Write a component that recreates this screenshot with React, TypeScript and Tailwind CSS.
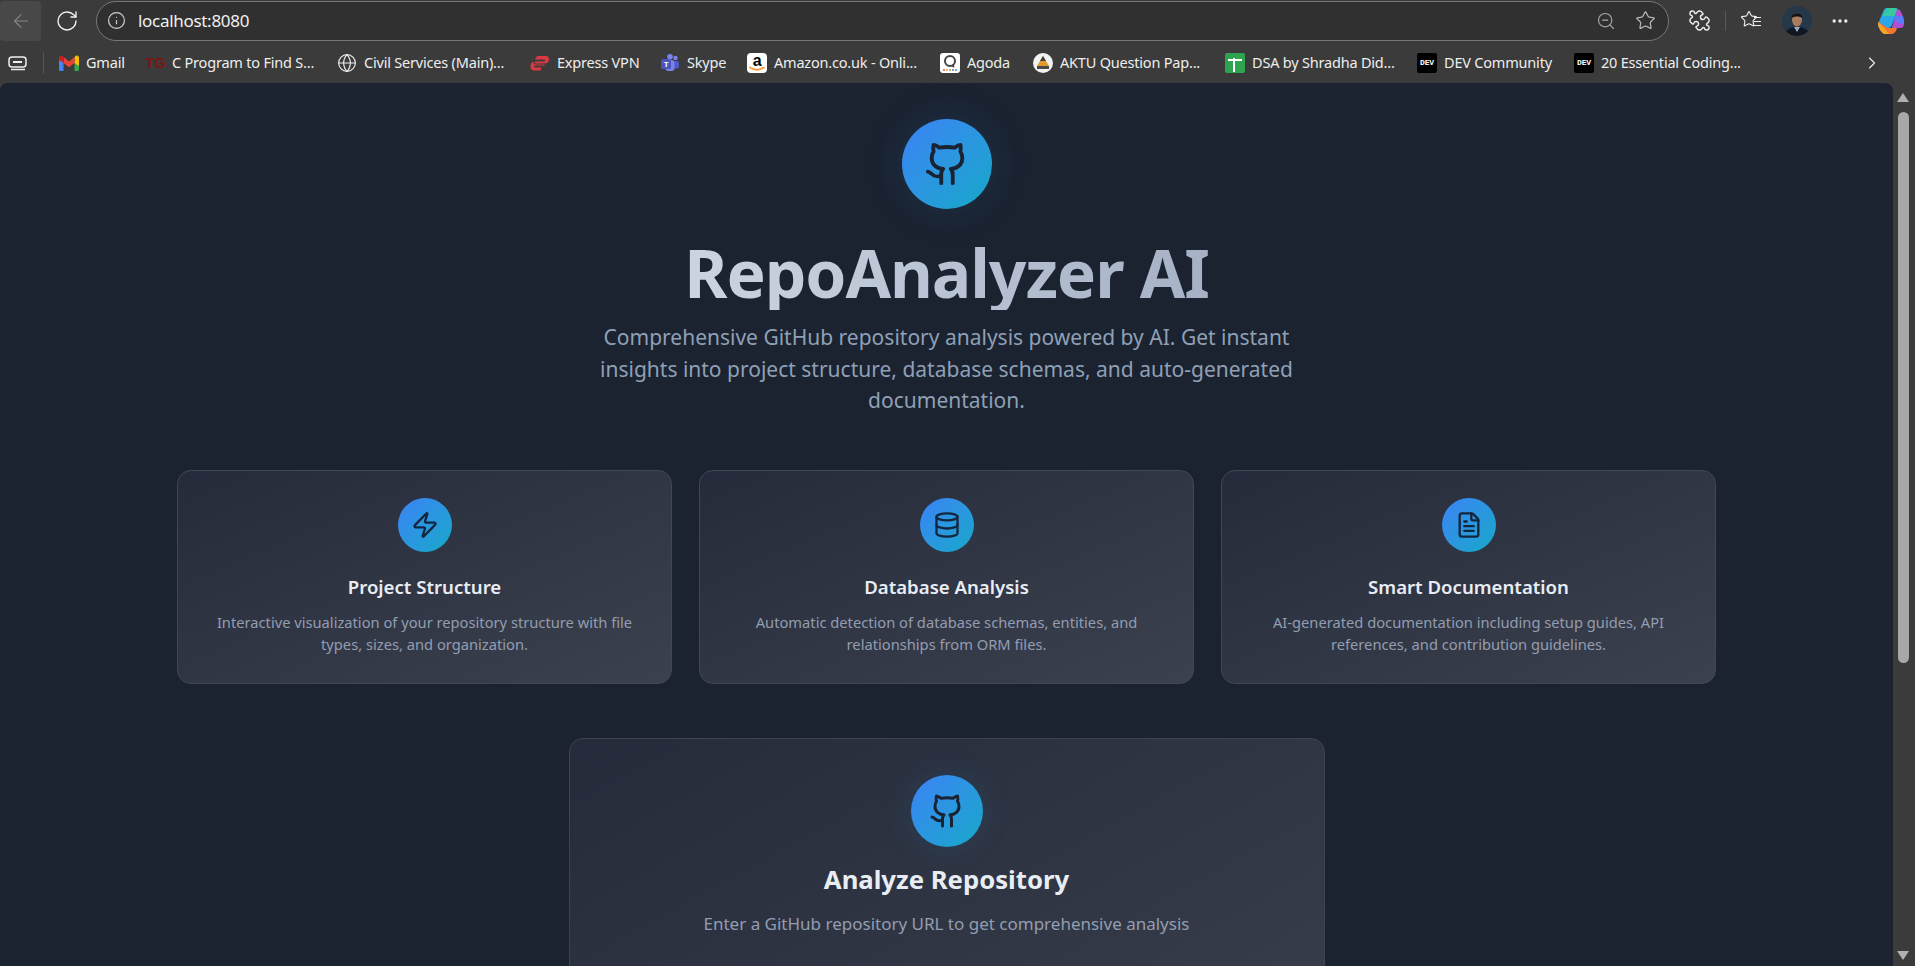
import { ArrowLeft, RotateCw, Info, ZoomOut, Star, Globe, ChevronRight, Zap, Database, FileText, Ellipsis, Puzzle } from "lucide-react";
import type { ReactNode } from "react";

function GithubIcon({ className }: { className: string }) {
  return (
    <svg viewBox="0 0 24 24" fill="none" stroke="currentColor" strokeWidth="2" strokeLinecap="round" strokeLinejoin="round" className={className}>
      <path d="M15 22v-4a4.8 4.8 0 0 0-1-3.5c3 0 6-2 6-5.5.08-1.25-.27-2.48-1-3.5.28-1.15.28-2.35 0-3.5 0 0-1 0-3 1.5-2.64-.5-5.36-.5-8 0C6 2 5 2 5 2c-.3 1.15-.3 2.35 0 3.5A5.403 5.403 0 0 0 4 9c0 3.5 3 5.5 6 5.5-.39.49-.68 1.05-.85 1.65-.17.6-.22 1.23-.15 1.85v4" />
      <path d="M9 18c-4.51 2-5-2-7-2" />
    </svg>
  );
}

function GmailIcon() {
  return (
    <svg viewBox="0 0 20 16" className="w-5 h-4">
      <path d="M0 3v11.500A1.500 1.500 0 0 0 1.500 16H4.500V7z" fill="#4285f4" />
      <path d="M20 3v11.500a1.500 1.500 0 0 1-1.500 1.500h-3V7z" fill="#34a853" />
      <path d="M15.500 2v6L20 11V3c0-2-2-3-3.400-2z" fill="#fbbc04" />
      <path d="M4.500 8V2L10 6.500 15.500 2v6L10 12.200z" fill="#ea4335" />
      <path d="M0 3c0-2 2-3 3.400-2l1.100 1v6L0 5z" fill="#c5221f" />
    </svg>
  );
}

function ExpressIcon() {
  return (
    <svg viewBox="0 0 20 20" className="w-5 h-5">
      <path d="M8 3h8c2 0 3 1.500 3 3.500 0 2.500-2 4-4 4H6c-2 0-2-2 0-2h8c1.500 0 1.500-2 0-2H5C6 4 7 3 8 3z" fill="#da3940" />
      <path d="M3 8.500c-2 1-2.500 3-2.500 5 0 2.500 1.500 4 4 4h6l1-3H5c-1.500 0-1.500-2 0-2h8c1 0 2-.5 2-1H6C4 11.500 3 10 3 8.500z" fill="#da3940" />
    </svg>
  );
}

function TeamsIcon() {
  return (
    <svg viewBox="0 0 20 20" className="w-5 h-5">
      <circle cx="15.500" cy="5" r="2.200" fill="#7b83eb" />
      <circle cx="10" cy="3.800" r="2.800" fill="#7b83eb" />
      <rect x="12" y="8" width="7" height="7.500" rx="2" fill="#5059c9" />
      <rect x="5.500" y="7" width="9" height="11" rx="3" fill="#7b83eb" />
      <rect x="1" y="6" width="10" height="10" rx="1.500" fill="#4b53bc" />
      <text x="6" y="14" textAnchor="middle" fontSize="8" fontWeight="700" fill="#fff" fontFamily="Liberation Sans, sans-serif">T</text>
    </svg>
  );
}

function AmazonIcon() {
  return (
    <div className="relative w-5 h-5 bg-white rounded-[4px] flex justify-center overflow-hidden">
      <span className="text-[16px] leading-[15px] font-bold text-black font-['Liberation_Sans',sans-serif]">a</span>
      <svg viewBox="0 0 20 20" className="absolute inset-0 w-5 h-5">
        <path d="M3 14.500c4 3 10 3 14 0" fill="none" stroke="#f79c34" strokeWidth="1.800" strokeLinecap="round" />
      </svg>
    </div>
  );
}

function AgodaIcon() {
  return (
    <div className="relative w-5 h-5 bg-white rounded-[3px]">
      <svg viewBox="0 0 20 20" className="w-5 h-5">
        <circle cx="10" cy="8" r="5" fill="none" stroke="#444" strokeWidth="2" />
        <path d="M12 12l2 2" stroke="#444" strokeWidth="2" />
        <circle cx="4" cy="17" r="1" fill="#e2474b" />
        <circle cx="7" cy="17" r="1" fill="#f5a623" />
        <circle cx="10" cy="17" r="1" fill="#7bb342" />
        <circle cx="13" cy="17" r="1" fill="#8e5bb5" />
        <circle cx="16" cy="17" r="1" fill="#3d8fd1" />
      </svg>
    </div>
  );
}

function AktuIcon() {
  return (
    <svg viewBox="0 0 20 20" className="w-5 h-5">
      <circle cx="10" cy="10" r="10" fill="#f2f2f2" />
      <path d="M10 3l6 10H4z" fill="#e39a2c" />
      <path d="M10 3l3 5H7z" fill="#3c3c3c" />
      <rect x="4" y="13" width="12" height="3" fill="#4a4a4a" />
    </svg>
  );
}

function SheetIcon() {
  return (
    <div className="relative w-5 h-5 bg-[#2ea44f] rounded-[2px]">
      <div className="absolute left-[8px] top-[5px] w-[2px] h-[14px] bg-white" />
      <div className="absolute left-[3px] top-[6px] w-[14px] h-[2px] bg-white" />
    </div>
  );
}

function DevIcon() {
  return (
    <div className="w-5 h-5 bg-black rounded-[2px] flex items-center justify-center text-white text-[8px] font-bold font-['Liberation_Mono',monospace]">
      DEV
    </div>
  );
}

const bookmarks: { label: string; width: string; icon: ReactNode }[] = [
  { label: "Gmail", width: "w-[86px]", icon: <GmailIcon /> },
  {
    label: "C Program to Find S...",
    width: "w-[192px]",
    icon: <span className="w-5 text-[15px] leading-5 font-bold text-[#7c1512] font-['Liberation_Sans',sans-serif]">TG</span>,
  },
  { label: "Civil Services (Main)...", width: "w-[193px]", icon: <Globe className="w-5 h-5 text-[#eeeeee]" strokeWidth={1.4} /> },
  { label: "Express VPN", width: "w-[130px]", icon: <ExpressIcon /> },
  { label: "Skype", width: "w-[87px]", icon: <TeamsIcon /> },
  { label: "Amazon.co.uk - Onli...", width: "w-[193px]", icon: <AmazonIcon /> },
  { label: "Agoda", width: "w-[93px]", icon: <AgodaIcon /> },
  { label: "AKTU Question Pap...", width: "w-[192px]", icon: <AktuIcon /> },
  { label: "DSA by Shradha Did...", width: "w-[192px]", icon: <SheetIcon /> },
  { label: "DEV Community", width: "w-[157px]", icon: <DevIcon /> },
  { label: "20 Essential Coding...", width: "w-[180px]", icon: <DevIcon /> },
];

const features = [
  {
    title: "Project Structure",
    text: "Interactive visualization of your repository structure with file types, sizes, and organization.",
    icon: Zap,
  },
  {
    title: "Database Analysis",
    text: "Automatic detection of database schemas, entities, and relationships from ORM files.",
    icon: Database,
  },
  {
    title: "Smart Documentation",
    text: "AI-generated documentation including setup guides, API references, and contribution guidelines.",
    icon: FileText,
  },
];

function BrowserBar() {
  return (
    <div className="shrink-0 bg-[#3b3b3b] text-[#eeeeee]">
      <div className="h-[41px] flex items-center">
        <div className="w-[41px] h-[40px] bg-[#484848] rounded-[4px] flex items-center justify-center">
          <ArrowLeft className="w-[22px] h-[22px] text-[#858585]" strokeWidth={1.3} />
        </div>
        <RotateCw className="w-[24px] h-[24px] ml-[14px] text-[#f0f0f0]" strokeWidth={1.4} />
        <div className="ml-[17px] w-[1573px] h-[40px] rounded-full border border-[#777777] bg-[#303030] flex items-center pl-[10px] pr-[12px]">
          <Info className="w-[19px] h-[19px] text-[#d0d0d0]" strokeWidth={1.5} />
          <span className="ml-[12px] text-[17px] tracking-[-0.3px] text-[#f0f0f0]">localhost:8080</span>
          <ZoomOut className="ml-auto w-[20px] h-[20px] text-[#a8a8a8]" strokeWidth={1.4} />
          <Star className="ml-[19px] w-[21px] h-[21px] text-[#b8b8b8]" strokeWidth={1.4} />
        </div>
        <Puzzle className="ml-[19px] w-[23px] h-[23px] text-[#eeeeee] -scale-x-100" strokeWidth={1.5} />
        <div className="ml-[14px] w-px h-[20px] bg-[#5a5a5a]" />
        <div className="relative ml-[14px] w-[21px] h-[21px]">
          <Star className="w-[18px] h-[18px] text-[#eeeeee]" strokeWidth={1.5} />
          <div className="absolute right-0 top-[7px] w-[7px] h-px bg-[#eeeeee]" />
          <div className="absolute right-0 top-[11px] w-[7px] h-px bg-[#eeeeee]" />
          <div className="absolute right-0 top-[15px] w-[7px] h-px bg-[#eeeeee]" />
        </div>
        <svg viewBox="0 0 30 30" className="ml-[21px] w-[30px] h-[30px] rounded-full">
          <rect width="30" height="30" fill="#24384a" />
          <path d="M2 30c1-7 7-9 13-9s12 2 13 9z" fill="#0f1722" />
          <path d="M12 21l3 5 3-5z" fill="#9fb0bd" />
          <ellipse cx="15" cy="14" rx="5" ry="6.500" fill="#a97b5f" />
          <path d="M9.500 12c0-6 11-6 11 0-3-2-8-2-11 0z" fill="#14110f" />
        </svg>
        <Ellipsis className="ml-[18px] w-[20px] h-[20px] text-[#eeeeee]" strokeWidth={2} />
        <svg viewBox="0 0 28 28" className="ml-[27px] w-[28px] h-[28px]">
          <path d="M10 1h8c2 0 3 1 2 3l-5 14c-.7 2-2 3-4 3H4C1.500 21 .5 19 1 17L6 5c.8-2.500 2-4 4-4z" fill="#2aa7e8" />
          <path d="M10 1h8c2 0 3 1 2 3l-2 5H5z" fill="#37c8a0" />
          <path d="M20 2c4 0 7 8 7 15 0 3-2 4-4 4h-8z" fill="#b04fd6" />
          <path d="M18 9h8c1 3 1 6 1 8-4 0-7-1-10-5z" fill="#5b7cf5" />
          <path d="M1 15l10 6h9c-1 4-3 6-6 6H8c-3 0-7-6-7-12z" fill="#f2762e" />
          <path d="M8 27c-3 0-7-6-7-12l8 8c1 2 3 4 5 4z" fill="#f5a623" />
        </svg>
      </div>
      <div className="h-[42px] pt-[2px] flex items-center text-[14.500px] tracking-[-0.2px]">
        <svg viewBox="0 0 20 20" fill="none" stroke="#eeeeee" strokeWidth="1.500" className="ml-[8px] w-[20px] h-[20px]">
          <rect x="1" y="4" width="17" height="10" rx="3" />
          <path d="M5 9h9" strokeWidth="2" />
          <path d="M3 16.500h14" />
        </svg>
        <div className="ml-[15px] mr-[15px] w-px h-[22px] bg-[#555555]" />
        {bookmarks.map((b) => (
          <div key={b.label + b.width} className={`${b.width} shrink-0 flex items-center gap-[7px]`}>
            {b.icon}
            <span className="whitespace-nowrap">{b.label}</span>
          </div>
        ))}
        <ChevronRight className="ml-[108px] w-[20px] h-[20px]" strokeWidth={1.3} />
      </div>
    </div>
  );
}

function Scrollbar() {
  return (
    <div className="w-[22px] shrink-0 bg-[#3b3b3b] flex flex-col items-center pt-[10px] pb-[6px] pr-[2px]">
      <svg viewBox="0 0 12 9" className="w-3 h-[9px] shrink-0">
        <path d="M6 0l6 9H0z" fill="#b0b0b0" />
      </svg>
      <div className="mt-[10px] w-[11px] h-[551px] shrink-0 rounded-full bg-[#a8a8a8]" />
      <svg viewBox="0 0 12 9" className="mt-auto w-3 h-[9px] shrink-0">
        <path d="M0 0h12L6 9z" fill="#b0b0b0" />
      </svg>
    </div>
  );
}

export default function App() {
  return (
    <div className="h-screen overflow-hidden flex flex-col bg-[#3b3b3b] font-['Noto_Sans',sans-serif]">
      <BrowserBar />
      <div className="flex-1 min-h-0 flex">
        <main className="flex-1 min-w-0 overflow-hidden rounded-t-[8px] bg-[#1b2230] pt-[36px] flex flex-col items-center">
          <div className="w-[90px] h-[90px] shrink-0 rounded-full bg-gradient-to-br from-[#3b82f6] to-[#14a8c8] flex items-center justify-center text-[#1a2332] shadow-[0_0_40px_rgba(30,150,220,0.15)]">
            <GithubIcon className="w-[46px] h-[46px]" />
          </div>
          <h1 className="mt-[25px] shrink-0 text-[66px] leading-[76px] font-bold tracking-[-1.100px] text-transparent bg-clip-text bg-gradient-to-r from-[#cbd5e1] to-[#a6b1c6]">
            RepoAnalyzer AI
          </h1>
          <p className="mt-[12px] shrink-0 w-[720px] text-center text-[21px] leading-[31.500px] text-[#8fa0b6]">
            Comprehensive GitHub repository analysis powered by AI. Get instant insights into project structure, database schemas, and auto-generated documentation.
          </p>
          <div className="mt-[53px] shrink-0 w-[1539px] grid grid-cols-3 gap-[27px]">
            {features.map((f) => {
              const Icon = f.icon;
              return (
                <div key={f.title} className="h-[214px] rounded-[14px] border border-[#404756] bg-gradient-to-br from-[#252b3a] to-[#3c414f] pt-[27px] px-6 flex flex-col items-center text-center">
                  <div className="w-[54px] h-[54px] shrink-0 rounded-full bg-gradient-to-br from-[#3b82f6] to-[#14a8c8] flex items-center justify-center text-[#13263f]">
                    <Icon className="w-[28px] h-[28px]" strokeWidth={2} />
                  </div>
                  <h3 className="mt-[21px] text-[18.600px] leading-[28px] font-semibold text-[#e8edf4]">{f.title}</h3>
                  <p className="mt-[10px] text-[14.700px] leading-[22px] text-[#939db0]">{f.text}</p>
                </div>
              );
            })}
          </div>
          <div className="mt-[54px] w-[756px] shrink-0 h-[420px] rounded-[14px] border border-[#3c4352] bg-gradient-to-br from-[#252b3a] to-[#3c414f] pt-[36px] flex flex-col items-center">
            <div className="w-[72px] h-[72px] shrink-0 rounded-full bg-gradient-to-br from-[#3b82f6] to-[#14a8c8] flex items-center justify-center text-[#1a2332] shadow-[0_0_30px_rgba(30,150,220,0.15)]">
              <GithubIcon className="w-9 h-9" />
            </div>
            <h2 className="mt-[15px] text-[25.700px] leading-[36px] font-bold text-[#e8edf4]">Analyze Repository</h2>
            <p className="mt-[13px] text-[17px] leading-[26px] text-[#939db0]">Enter a GitHub repository URL to get comprehensive analysis</p>
          </div>
        </main>
        <Scrollbar />
      </div>
    </div>
  );
}
